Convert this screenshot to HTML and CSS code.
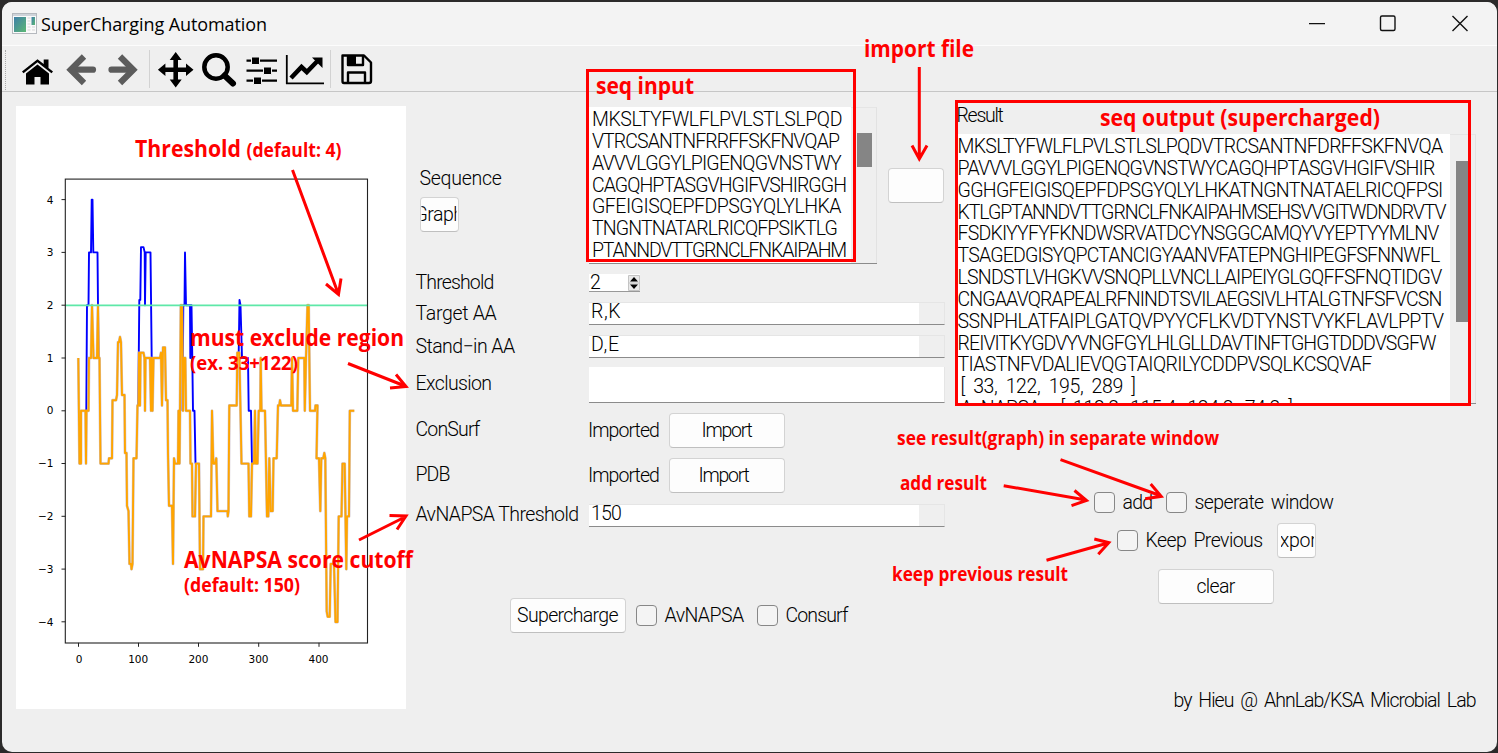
FILE: index.html
```html
<!DOCTYPE html>
<html lang="en">
<head>
<meta charset="utf-8">
<title>SuperCharging Automation</title>
<link rel="stylesheet" href="styles.css">
</head>
<body>
<div class="window">
  <header class="titlebar">
    <svg class="app-icon" width="25" height="21" viewBox="0 0 25 21">
      <defs><linearGradient id="g" x1="0" y1="0" x2="1" y2="1"><stop offset="0" stop-color="#3f7fa8"/><stop offset="1" stop-color="#5cb874"/></linearGradient></defs>
      <rect x=".5" y=".5" width="24" height="20" fill="#fafafa" stroke="#b5b9be"/>
      <rect x="1" y="1" width="23" height="2" fill="#cfd4da"/>
      <rect x="2" y="4" width="12" height="15" fill="url(#g)"/>
      <path d="M15.500 5h3M15.500 8h3M15.500 11h3M15.500 14h3M15.500 17h3M20 14h3M20 17h3" stroke="#d5d5d5"/>
      <rect x="19.500" y="4" width="3.500" height="8" fill="url(#g)"/>
    </svg>
    <span class="title" data-w="226">SuperCharging Automation</span>
    <svg class="caption" width="190" height="20" viewBox="0 0 190 20" fill="none" stroke="#111" stroke-width="1.400">
      <path d="M10 9.600h16"/><rect x="81.500" y="2" width="14.500" height="14.500" rx="1.500"/><path d="M153.500 2l15 15M168.500 2l-15 15"/>
    </svg>
  </header>
  <nav class="toolbar">
    <span class="grip"></span>
    <svg class="tools" width="370" height="45" viewBox="6 46 370 45">
      <path d="M22 71.500L37.500 59.300 43.700 64V59.500H48.500V68L53 71.500 51.500 73.200 37.500 62.300 23.500 73.200z"/>
      <path d="M26 73.500L37.500 64.500 49 73.500V84.500H40.500V77H34.500V84.500H26z"/>
      <g fill="none" stroke="#5c5c5c" stroke-width="6.200" stroke-linejoin="miter">
        <path d="M93 69.700H72" stroke-linecap="round"/><path d="M84 56.500L70.700 69.700 84 83"/>
        <path d="M111.500 69.700H132" stroke-linecap="round"/><path d="M120 56.500L133.300 69.700 120 83"/>
      </g>
      <path d="M149.500 50v38M330.500 50v38" stroke="#d2d2d2"/>
      <path d="M175.700 52l6 8h-3.700v7.500h8v-4l7.500 6.200-7.500 6.300v-4h-8v7.500h3.700l-6 8-6-8h3.700V72h-8v4l-7.500-6.300 7.500-6.200v4h8V60h-3.700z"/>
      <circle cx="216" cy="67" r="11.700" fill="none" stroke="#000" stroke-width="4.500"/>
      <path d="M224.500 75.500l8.500 8" stroke="#000" stroke-width="6" stroke-linecap="round"/>
      <path d="M246.500 60.700H277M246.500 70.700H277M246.500 80.700H277" stroke="#000" stroke-width="2.200"/>
      <path d="M251.500 57h8v7.500h-8zM263.500 67h8v7.500h-8zM253.500 77h8v7.500h-8z" stroke="#efefef" stroke-width="1"/>
      <path d="M286.800 55v28.300H324" fill="none" stroke="#000" stroke-width="1.800"/>
      <path d="M291 78l10.500-11 5.300 5L317 61.500" fill="none" stroke="#000" stroke-width="4.500"/><path d="M312 57.500H322.500V68z"/>
      <g fill="none" stroke="#000" stroke-width="2.400" stroke-linejoin="round"><path d="M342.500 55.500h21.500l7 7v18.500q0 2-2 2h-25q-1.500 0-1.500-2z"/><path d="M348 55.500v9.500h15v-9.500M348 83V72.500h17V83"/></g><path d="M348.500 56h7.500v8.500h-7.500z"/>
    </svg>
  </nav>
  <main class="content">
    <section class="plot">
      <svg width="390" height="603" viewBox="16 106.200 390 603">
        <g class="trace">
          <g id="blue" stroke="#0000ff"></g>
          <polyline id="shade" stroke="#b9a9b8"/>
          <polyline id="orange" stroke="#ffa500"/>
        </g>
        <path d="M65.500 305.500h302" stroke="#5ee8a8" stroke-width="1.700"/>
        <rect x="65.300" y="179.300" width="302.200" height="463.900" fill="none" stroke="#222" stroke-width="1.100"/>
        <path d="M61.500 199.800h4M61.500 252.600h4M61.500 305.400h4M61.500 358.200h4M61.500 411h4M61.500 463.700h4M61.500 516.500h4M61.500 569.300h4M61.500 622h4M78.500 643v4M138.500 643v4M198.500 643v4M258.700 643v4M319 643v4" stroke="#222"/>
        <g class="ticks" text-anchor="end"><text x="53.500" y="204">4</text><text x="53.500" y="256.500">3</text><text x="53.500" y="309.300">2</text><text x="53.500" y="362">1</text><text x="53.500" y="414.700">0</text><text x="53.500" y="467.500">−1</text><text x="53.500" y="520.300">−2</text><text x="53.500" y="573.300">−3</text><text x="53.500" y="626">−4</text></g>
        <g class="ticks" text-anchor="middle"><text x="79" y="663">0</text><text x="138.200" y="663">100</text><text x="198.400" y="663">200</text><text x="258.500" y="663">300</text><text x="318.500" y="663">400</text></g>
      </svg>
    </section>

    <section class="form">
      <div class="row row-seq">
        <div class="label seq-label"><span data-w="82">Sequence</span><button class="btn small"><span class="graph" data-w="49">Graph</span></button></div>
        <div class="area input-area">
          <div class="lines">
            <div><span data-w="250">MKSLTYFWLFLPVLSTLSLPQD</span></div>
            <div><span data-w="247">VTRCSANTNFRRFFSKFNVQAP</span></div>
            <div><span data-w="249">AVVVLGGYLPIGENQGVNSTWY</span></div>
            <div><span data-w="254">CAGQHPTASGVHGIFVSHIRGGH</span></div>
            <div><span data-w="249">GFEIGISQEPFDPSGYQLYLHKA</span></div>
            <div><span data-w="245">TNGNTNATARLRICQFPSIKTLG</span></div>
            <div><span data-w="254">PTANNDVTTGRNCLFNKAIPAHM</span></div>
          </div>
          <div class="scroll"><i class="thumb"></i></div>
        </div>
        <button class="btn file"></button>
      </div>
      <div class="row row-threshold"><div class="label"><span data-w="78">Threshold</span></div>
        <div class="spin"><span>2</span><svg width="12" height="16" viewBox="0 0 12 16"><path d="M.5.500h11v15H.5zM.5 8h11" fill="#e9e9e9" stroke="#c4c4c4"/><path d="M6 2l4 4.500H2zM6 14l4-4.500H2z"/></svg></div></div>
      <div class="row row-target"><div class="label"><span data-w="81">Target AA</span></div><div class="field"><div class="value"><span data-w="30">R,K</span></div></div></div>
      <div class="row row-stand"><div class="label"><span data-w="99">Stand−in AA</span></div><div class="field"><div class="value"><span data-w="29">D,E</span></div></div></div>
      <div class="row row-excl"><div class="label"><span data-w="76">Exclusion</span></div><div class="field full"></div></div>
      <div class="row row-consurf"><div class="label"><span data-w="64">ConSurf</span></div><span class="state"><span data-w="71">Imported</span></span><button class="btn"><span data-w="50">Import</span></button></div>
      <div class="row row-pdb"><div class="label"><span data-w="34">PDB</span></div><span class="state"><span data-w="71">Imported</span></span><button class="btn shift"><span data-w="50">Import</span></button></div>
      <div class="row row-av"><div class="label"><span data-w="163">AvNAPSA Threshold</span></div><div class="field"><div class="value"><span data-w="30">150</span></div></div></div>
      <div class="actions"><button class="btn"><span data-w="101">Supercharge</span></button><i class="check"></i><span class="opt"><span data-w="79">AvNAPSA</span></span><i class="check second"></i><span data-w="62">Consurf</span></div>
    </section>

    <section class="result">
      <div class="result-title"><span data-w="46">Result</span></div>
      <div class="area output-area">
        <div class="lines">
          <div><span data-w="485">MKSLTYFWLFLPVLSTLSLPQDVTRCSANTNFDRFFSKFNVQA</span></div>
          <div><span data-w="477">PAVVVLGGYLPIGENQGVNSTWYCAGQHPTASGVHGIFVSHIR</span></div>
          <div><span data-w="485">GGHGFEIGISQEPFDPSGYQLYLHKATNGNTNATAELRICQFPSI</span></div>
          <div><span data-w="488">KTLGPTANNDVTTGRNCLFNKAIPAHMSEHSVVGITWDNDRVTV</span></div>
          <div><span data-w="481">FSDKIYYFYFKNDWSRVATDCYNSGGCAMQYVYEPTYYMLNV</span></div>
          <div><span data-w="482">TSAGEDGISYQPCTANCIGYAANVFATEPNGHIPEGFSFNNWFL</span></div>
          <div><span data-w="484">LSNDSTLVHGKVVSNQPLLVNCLLAIPEIYGLGQFFSFNQTIDGV</span></div>
          <div><span data-w="484">CNGAAVQRAPEALRFNINDTSVILAEGSIVLHTALGTNFSFVCSN</span></div>
          <div><span data-w="486">SSNPHLATFAIPLGATQVPYYCFLKVDTYNSTVYKFLAVLPPTV</span></div>
          <div><span data-w="478">REIVITKYGDVYVNGFGYLHLGLLDAVTINFTGHGTDDDVSGFW</span></div>
          <div><span data-w="414">TIASTNFVDALIEVQGTAIQRILYCDDPVSQLKCSQVAF</span></div>
          <div class="nums"><span data-w="175">[ 33, 122, 195, 289 ]</span></div>
          <div class="nums"><span data-w="332">AvNAPSA : [ 118.2, 115.4, 124.2, 74.2 ]</span></div>
        </div>
        <div class="scroll"><i class="thumb"></i></div>
      </div>
      <div class="options first"><i class="check"></i><span class="add"><span data-w="30">add</span></span><i class="check"></i><span data-w="139">seperate window</span></div>
      <div class="options keep"><i class="check"></i><span class="prev"><span data-w="117">Keep Previous</span></span><button class="btn small"><span class="export" data-w="54">Export</span></button></div>
      <button class="btn clear"><span data-w="38">clear</span></button>
      <footer><span data-w="302">by Hieu @ AhnLab/KSA Microbial Lab</span></footer>
    </section>
  </main>
</div>

<svg class="notes" width="1498" height="753" viewBox="0 0 1498 753">
  <g fill="none" stroke="#f00" stroke-width="3">
    <rect x="587.500" y="70.500" width="267" height="190"/>
    <rect x="956.500" y="101.500" width="513" height="303"/>
    <path d="M292.500 170L338 293M326 284l12.500 10.500 2.500-16"/>
    <path d="M348 363.500L405 386M396 374.500l10 12-16 1.500"/>
    <path d="M359 540L405 517M389.500 515.500l16.500.500-9 13.500"/>
    <path d="M919.300 67V158M912 145.500l7.300 13.500 7.700-13.500"/>
    <path d="M1060.500 459.700L1160 495.500M1150.700 484l10.500 12.300-16 2.400"/>
    <path d="M1003.700 485.700L1086 500M1074.500 490.500l12 10-15 5.200"/>
    <path d="M1046.500 560.300L1108 543M1094.300 539l14.500 3.700-10.500 11.500"/>
  </g>
  <g class="big">
    <text x="864" y="57" textLength="110">import file</text>
    <text x="596" y="94" textLength="98">seq input</text>
    <text x="1100" y="126" textLength="280">seq output (supercharged)</text>
    <text x="135" y="157" textLength="106">Threshold</text>
    <text x="190" y="346" textLength="214">must exclude region</text>
    <text x="184" y="568" textLength="229">AvNAPSA score cutoff</text>
  </g>
  <g class="little">
    <text x="246.500" y="157" textLength="95">(default: 4)</text>
    <text x="190" y="370" textLength="108">(ex. 33+122)</text>
    <text x="184" y="592" textLength="116">(default: 150)</text>
    <text x="897" y="445" textLength="322">see result(graph) in separate window</text>
    <text x="900" y="490" textLength="87">add result</text>
    <text x="892" y="581" textLength="176">keep previous result</text>
  </g>
</svg>
<script src="app.js"></script>
</body>
</html>
```
FILE: styles.css
```css
* { box-sizing: border-box; }
body { margin: 0; width: 1498px; height: 753px; overflow: hidden; background: #2b2a2a; font: 300 19.5px/22px Roboto, "Liberation Sans", sans-serif; color: #000; }
.window { margin: 2px 1px 0 2px; height: 750px; background: #efefef; border-radius: 10px; overflow: hidden; display: flex; flex-direction: column; }
.titlebar { height: 44px; flex: none; background: #f3f3f3; border-bottom: 1px solid #fcfcfc; display: flex; align-items: center; padding-left: 10px; }
.title { font: 400 18px/24px "Open Sans", sans-serif; margin-left: 4px; }
.caption { margin-left: auto; margin-right: 8px; }
.toolbar { height: 46px; flex: none; border-bottom: 1px solid #c6c6c6; display: flex; padding-left: 3px; }
.grip { width: 1px; height: 40px; margin-top: 4px; border-left: 1px dotted #aaa; }
.content { flex: 1; display: flex; padding: 14px 0 0 14px; }
.plot { width: 390px; height: 603px; background: #fff; flex: none; }
.plot svg, .toolbar svg { display: block; }
.trace polyline { fill: none; stroke-width: 1.9; stroke-linejoin: round; }
.trace #shade { stroke-width: 2.8; opacity: .7; }
.ticks { font: 400 10.5px "DejaVu Sans", sans-serif; }
[data-w] { display: inline-block; white-space: pre; }
.form { width: 529px; margin-left: 9.5px; flex: none; display: flex; flex-direction: column; }
.row { display: flex; align-items: center; }
.label { width: 173.5px; flex: none; }
.row-seq { height: 157px; align-items: flex-start; margin-top: 1px; }
.seq-label { padding: 61px 0 0 4px; display: flex; flex-direction: column; align-items: flex-start; gap: 7px; }
.seq-label .btn { margin-left: 0; }
.btn { width: 116px; height: 35px; padding: 0; background: #fdfdfd; border: 1px solid #d3d3d3; border-bottom-color: #bfbfbf; border-radius: 4px; font: inherit; color: #000; display: flex; align-items: center; justify-content: center; overflow: hidden; flex: none; }
.btn.small { width: 39px; border-left-width: 1px; padding: 0 1px; }
.graph { flex: none; clip-path: inset(0 7px); }
.export { flex: none; clip-path: inset(0 9px 0 12px); }
.btn.file { width: 56px; margin: 61px 0 0 11px; }
.btn.shift { padding-right: 6px; }
.area { display: flex; background: #fff; border-bottom: 1px solid #8b8b8b; overflow: hidden; }
.area .scroll { background: #efefef; border-top: 1px solid #e5e5e5; border-right: 1px solid #e2e2e2; flex: none; width: 26px; padding-left: 6px; }
.thumb { display: block; background: #858585; width: 15px; }
.lines { flex: 1; }
.lines > div { height: 21.85px; line-height: 22px; white-space: nowrap; }
.input-area { width: 288px; height: 157px; }
.input-area .lines { padding: 2px 0 0 3px; }
.input-area .thumb { margin-top: 25px; height: 34px; }
.spin { width: 51px; height: 18px; background: #fff; border-bottom: 1px solid #999; display: flex; align-items: center; justify-content: space-between; padding-left: 1px; }
.row-threshold { height: 18px; margin-top: 10px; }
.row-target { height: 23px; margin-top: 10px; }
.row-stand { height: 23px; margin-top: 10px; }
.row-excl { height: 36px; margin-top: 9px; }
.row-excl .label { padding-bottom: 2px; }
.row-consurf { height: 35px; margin-top: 10px; }
.row-pdb { height: 35px; margin-top: 10px; }
.row-av { height: 24px; margin-top: 10px; }
.row-consurf .label, .row-pdb .label { padding-bottom: 2px; }
.state { width: 80px; margin-left: -1px; margin-right: .5px; }
.field { flex: 1; height: 23px; border: 1px solid #e5e5e5; border-left: 0; border-bottom-color: #8b8b8b; padding-right: 25px; }
.field.full { height: 36px; background: #fff; border-top: 0; }
.value { background: #fff; height: 100%; padding-left: 2px; line-height: 18px; }
.actions { display: flex; align-items: center; margin: 71px 0 0 94px; height: 35px; }
.actions .btn { margin-right: 10px; }
.check { width: 21px; height: 21px; border: 1.5px solid #878787; border-radius: 4px; background: #f4f4f4; flex: none; margin-right: 8px; }
.opt { width: 92px; }
.result { width: 519px; margin-left: 12px; flex: none; display: flex; flex-direction: column; }
.result-title { height: 28px; line-height: 20px; }
.output-area { height: 270px; flex: none; }
.output-area .lines { padding: 2px 0 0 1px; }
.nums { word-spacing: 4px; padding-left: 3px; }
.output-area .thumb { margin-top: 26px; height: 161px; }
.options { display: flex; align-items: center; height: 35px; }
.options.first { margin: 81px 0 0 137px; }
.add { width: 43px; }
.options.keep { margin: 3px 0 0 160px; }
.prev { width: 131px; }
.clear { margin: 11px 0 0 201px; }
.options, footer { word-spacing: 3px; }
footer { margin: 86px 0 0 217px; }
.notes { position: absolute; left: 0; top: 0; pointer-events: none; }
.notes text { fill: #f00; font-family: "Open Sans", sans-serif; font-weight: 700; }
.big text { font-size: 23px; }
.little text { font-size: 19px; }
```
FILE: app.js
```js
// Series as [x pixel, value] pairs; the value axis has 52.8px per unit.
const orange = [[78.3,1],[79.5,-1],[81,-1],[81,0],[85.5,0],[86,-1],[86.5,0],[88.5,0],[89,1],[91,1],[92,2],[93.5,1],[97,1],[98,2],[98.5,1],[99.5,1],[100.5,-1],[108.5,-1],[109,-.9],[112,-.9],[112.5,.2],[116,.2],[117,.3],[118,1.3],[119,1.3],[120,1.4],[121,1.3],[122,.3],[124.5,.3],[125,-.8],[126.5,-.8],[127,-1.8],[128.5,-1.9],[129.5,-2.9],[131,-2.9],[131.5,-3],[132.5,-2.9],[133.5,-.9],[136.5,-.9],[137.5,.1],[138.5,.1],[139,1.1],[140,.1],[140.5,1.1],[143.5,1.1],[144.5,1],[145,0],[145.5,1],[150,1],[151,0],[151.5,1],[152.5,0],[153.5,1],[160,1],[161,1.1],[162,.1],[163,1.2],[165,1.2],[166,.2],[167.5,.2],[168,-.8],[169,-1.8],[172,-1.8],[173,-2.9],[174,-.9],[175,-1],[178,-1],[178.5,0],[179.5,-1],[180,0],[180.8,2],[182,2],[183,0],[184,1],[185.3,1],[186,0],[190,0],[190.5,-1],[192,-1],[192.5,-2],[195,-2],[196,-1],[199,-1],[200,-3],[203,-3],[203.5,-2],[211,-2],[212,0],[213.3,-1],[215,-1],[216.3,-.9],[217.5,-1.9],[227.5,-1.9],[227.8,-2],[228.5,-1.9],[229.3,.1],[236.7,.1],[237.3,1.1],[239.3,1.1],[240.5,0],[241.5,-1],[248.5,-1],[249.3,-2],[251,-2],[252,-1],[254,-1],[255,0],[255.8,-1],[257.5,-1],[258.7,0],[260.3,0],[260.7,1],[261.5,0],[265,0],[266,-1],[267,-2],[268.3,-2],[269.3,-.9],[270.7,-1.9],[272.7,-1.9],[273.5,-.9],[276.7,-.9],[278,.1],[279.3,.1],[280,.2],[281,.1],[291.3,.1],[292,1],[293,0],[297.3,0],[298.3,1],[304.3,1],[304.8,0],[306,1],[307.5,2],[308.7,2],[310,0],[315,0],[315.5,.1],[317.5,.1],[316.5,-.9],[319,-.9],[320.3,-1.9],[321.3,-.9],[323.3,-.9],[324.3,-.8],[325.3,-.9],[326.7,-3.8],[327.7,-3.9],[329.7,-3.9],[330.7,-2.9],[334,-2.9],[335.5,-4],[337.5,-4],[338.7,-2],[341.5,-2],[342.5,-1],[344.7,-1],[346.3,-3],[347,-2],[349,-2],[349.8,0],[354.3,0]];
// Stretches where the original series differs from the supercharged one.
const blue = [
  [[85,0],[86.3,0],[87,2],[88.5,2],[89,3],[91,3],[91.7,4],[92.5,4],[93.3,3],[97.5,3],[98.5,1]],
  [[138.3,.1],[138.8,1.1],[139.3,2.1],[140.3,2.1],[141,3.1],[143.5,3.1],[144.7,3],[145,2],[145.7,3],[150.5,3],[151.7,1]],
  [[182.5,0],[183.3,2],[184.5,2],[185,3],[186,2],[190,2],[190.3,1],[190.8,2],[191.5,2],[192.3,1],[193,0],[194.5,0],[195.5,-1]],
  [[238.7,1.1],[239.5,2.1],[240.5,2],[242,1],[248,1],[248.7,0],[251,0],[252,-1]]
];
const points = s => s.map(([x, v]) => x + ',' + (411 - v * 52.8).toFixed(1)).join(' ');
document.getElementById('orange').setAttribute('points', points(orange));
document.getElementById('shade').setAttribute('points', points(orange));
document.getElementById('blue').innerHTML = blue.map(s => `<polyline points="${points(s)}"/>`).join('');

// Track each label so that it fills its designed width.
document.querySelectorAll('[data-w]').forEach(el => {
  const width = el.getBoundingClientRect().width;
  el.style.letterSpacing = (el.dataset.w - width) / el.textContent.length + 'px';
});
document.querySelectorAll('.notes text').forEach(t => t.setAttribute('lengthAdjust', 'spacingAndGlyphs'));
```
